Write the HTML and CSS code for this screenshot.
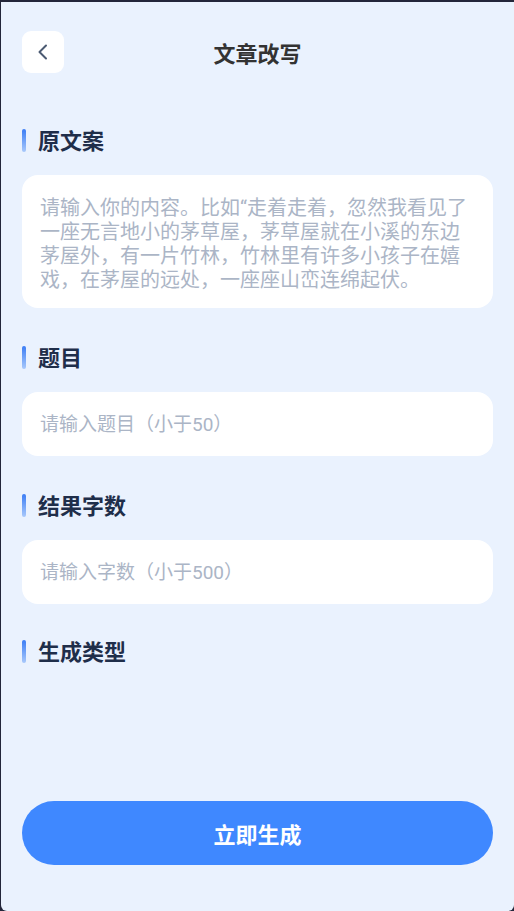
FILE: index.html
```html
<!DOCTYPE html>
<html lang="zh-CN">
<head>
  <meta charset="UTF-8">
  <title>文章改写</title>
  <link rel="stylesheet" href="styles.css">
</head>
<body>
  <div class="app">
    <div class="topbar">
      <button class="back" aria-label="返回">
        <svg width="16" height="16" viewBox="0 0 16 16">
          <path d="M11 1.5 L4.5 8 L11 14.5" fill="none" stroke="#4b5a72" stroke-width="2" stroke-linecap="round" stroke-linejoin="round"/>
        </svg>
      </button>
      <h1 class="title">文章改写</h1>
      <span></span>
    </div>

    <div class="section first">
      <h2 class="label">原文案</h2>
      <textarea class="field area" placeholder="请输入你的内容。比如“走着走着，忽然我看见了一座无言地小的茅草屋，茅草屋就在小溪的东边茅屋外，有一片竹林，竹林里有许多小孩子在嬉戏，在茅屋的远处，一座座山峦连绵起伏。"></textarea>
    </div>

    <div class="section">
      <h2 class="label">题目</h2>
      <input class="field" type="text" placeholder="请输入题目（小于50）">
    </div>

    <div class="section">
      <h2 class="label">结果字数</h2>
      <input class="field" type="text" placeholder="请输入字数（小于500）">
    </div>

    <div class="section last">
      <h2 class="label">生成类型</h2>
    </div>

    <button class="submit">立即生成</button>
  </div>
</body>
</html>
```

FILE: styles.css
```css
html, body {
  height: 100%;
}
body {
  margin: 0;
  background: #23263a;
  font-family: Roboto, "Noto Sans CJK SC", sans-serif;
}
.app {
  box-sizing: border-box;
  height: calc(100% - 2px);
  margin: 2px 0 0 1px;
  padding: 29px 21px 46px;
  background: #eaf2fe;
  border-radius: 0 0 6px 6px;
  display: flex;
  flex-direction: column;
}
.topbar {
  display: grid;
  grid-template-columns: 42px 1fr 42px;
  align-items: center;
}
.back {
  width: 42px;
  height: 42px;
  border: none;
  border-radius: 9px;
  background: #fff;
  padding: 0;
  display: flex;
  align-items: center;
  justify-content: center;
  cursor: pointer;
}
.title {
  margin: 0;
  text-align: center;
  font-size: 22px;
  font-weight: 700;
  color: #333;
}
.section {
  margin-top: 36px;
}
.section.first {
  margin-top: 54px;
}
.section.last {
  margin-top: 34px;
}
.label {
  display: flex;
  align-items: center;
  gap: 12px;
  height: 23px;
  margin: 0 0 25px;
  font-size: 22px;
  font-weight: 700;
  color: #1f2e4a;
}
.label::before {
  content: "";
  width: 4px;
  height: 23px;
  margin-top: 4px;
  border-radius: 2px;
  background: linear-gradient(#3b7df5, #a9c9fb);
}
.field {
  display: block;
  box-sizing: border-box;
  width: 100%;
  height: 64px;
  padding: 0 18px;
  border: none;
  border-radius: 16px;
  background: #fff;
  font-family: inherit;
  font-size: 19px;
  color: #333;
  outline: none;
}
.field::placeholder {
  color: #abb5c6;
}
.area {
  height: 133px;
  padding: 21px 18px 16px;
  font-size: 20px;
  line-height: 24px;
  resize: none;
}
.submit {
  margin-top: auto;
  height: 64px;
  border: none;
  border-radius: 32px;
  background: #3f88ff;
  color: #fff;
  font-family: inherit;
  font-size: 22px;
  font-weight: 700;
  cursor: pointer;
}
```
